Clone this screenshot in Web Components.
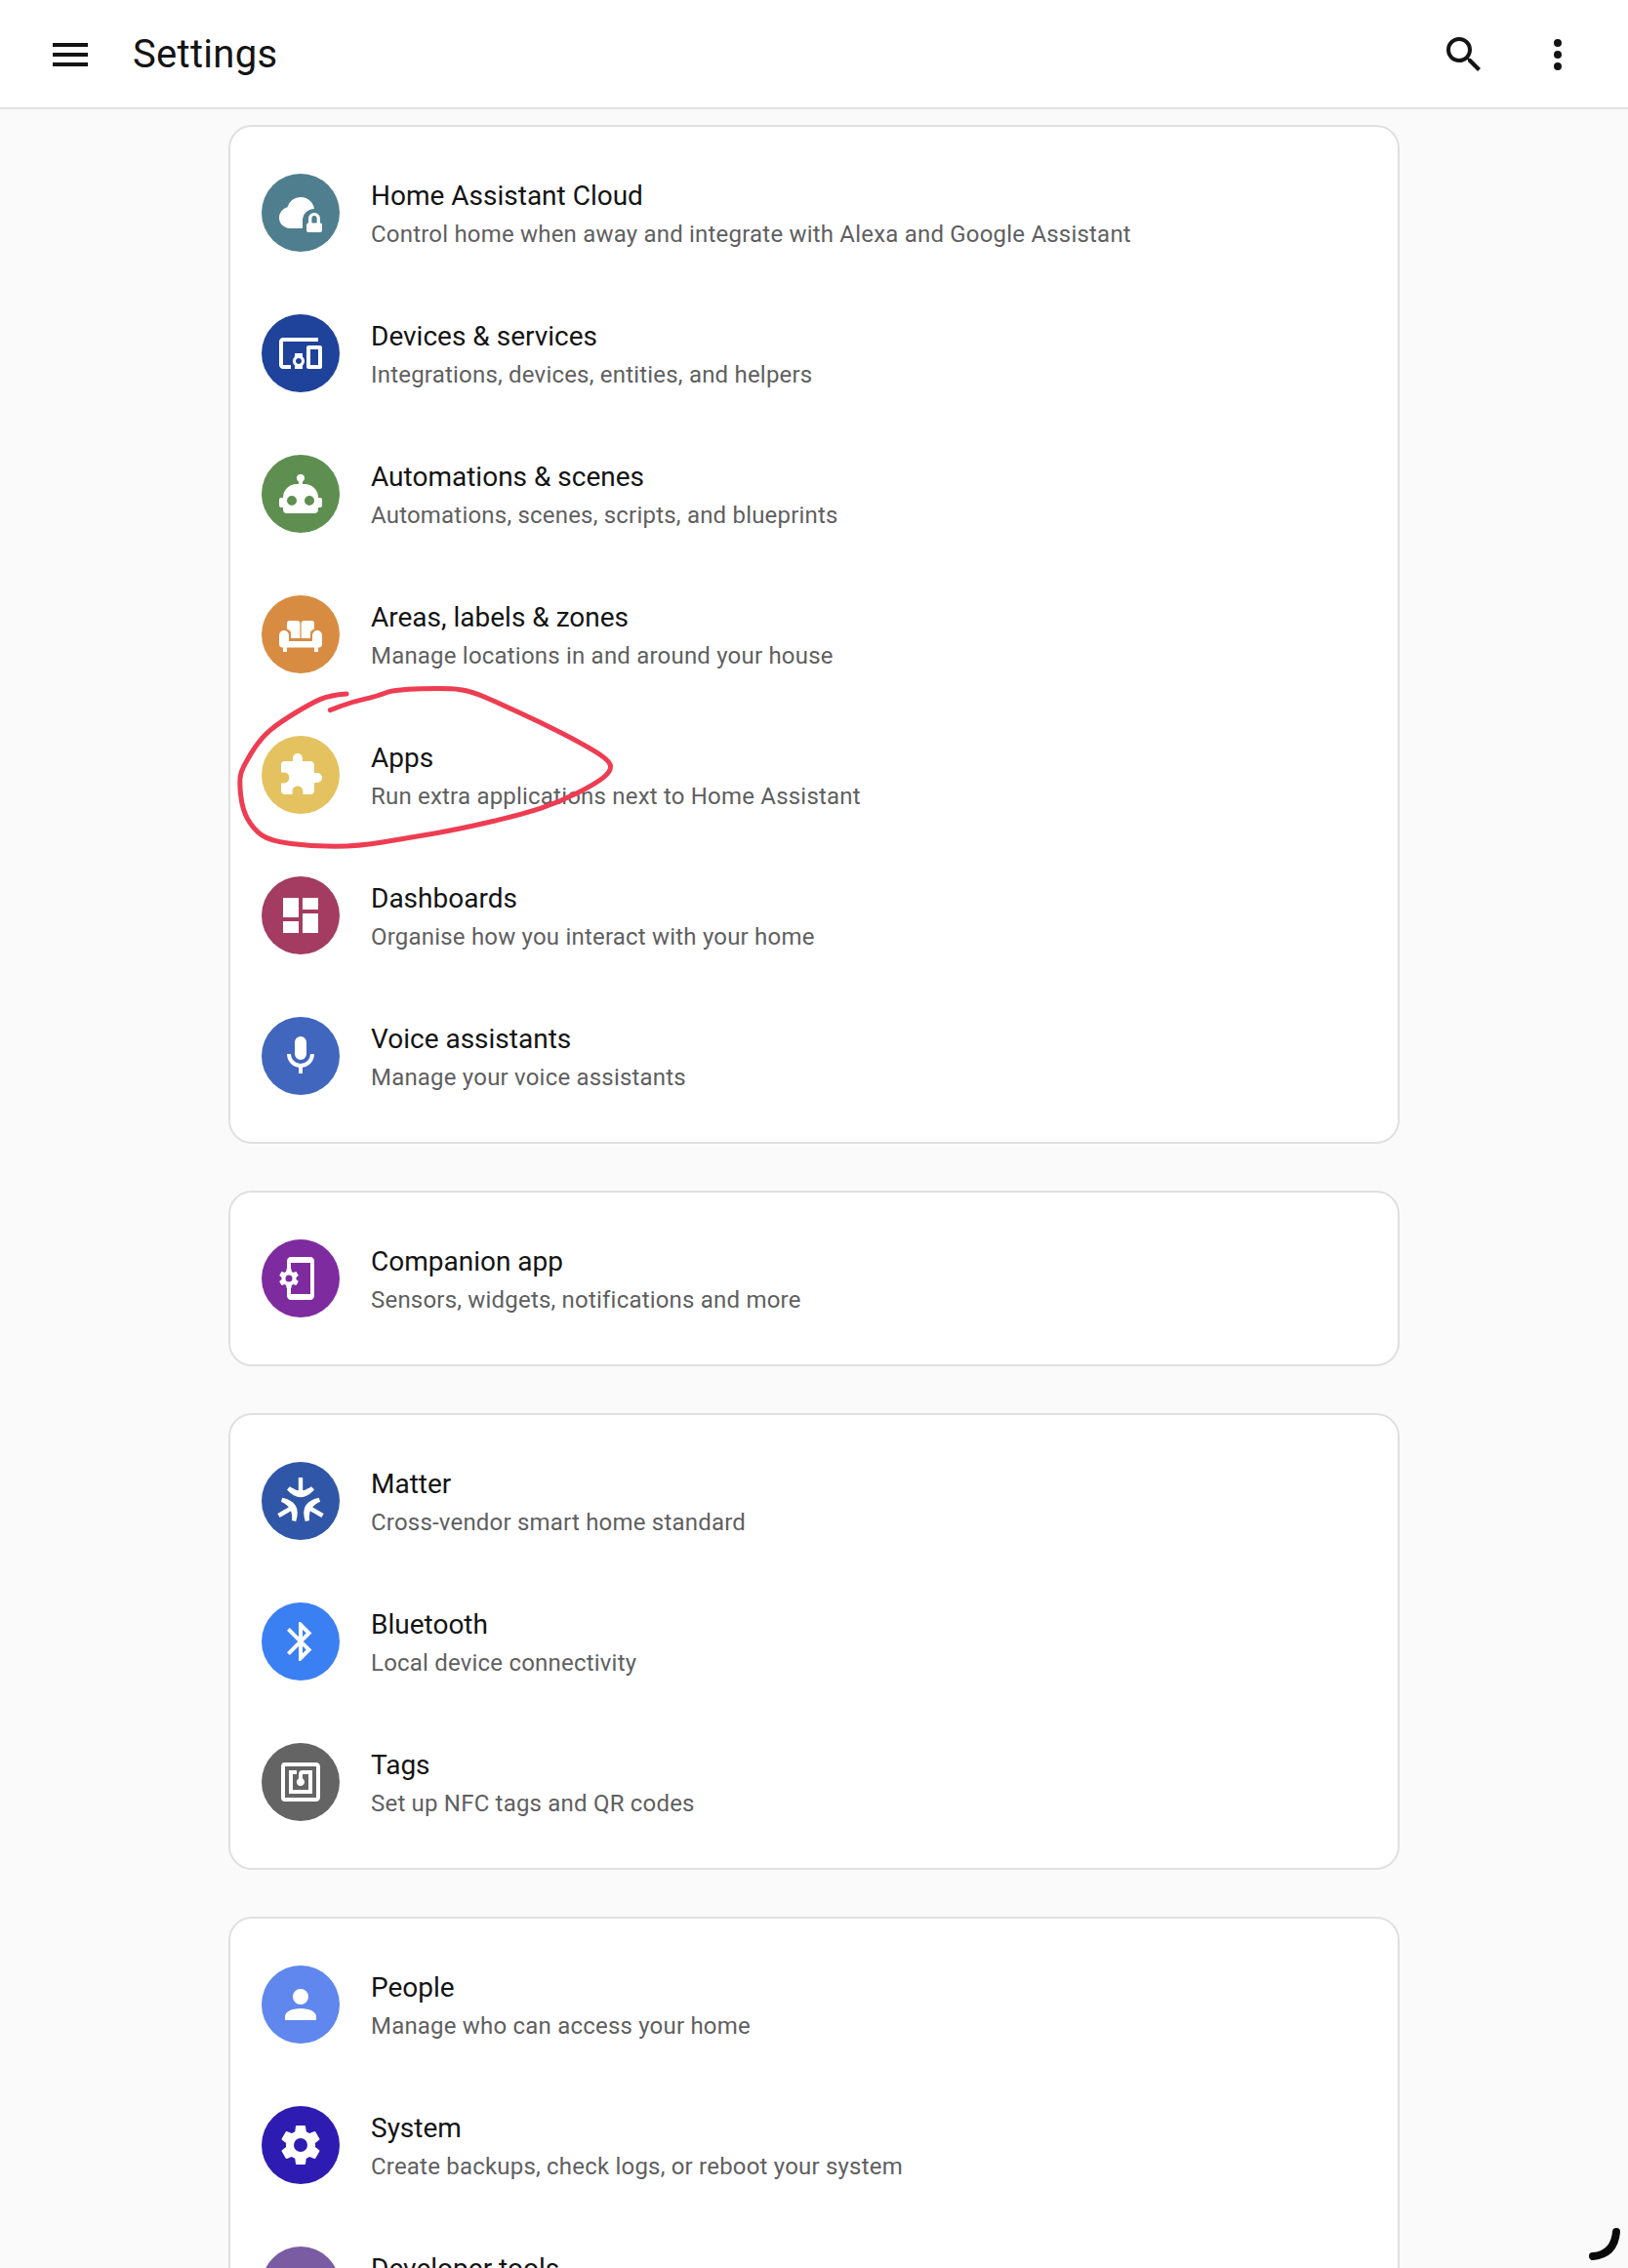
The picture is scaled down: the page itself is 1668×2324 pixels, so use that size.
<!DOCTYPE html>
<html lang="en">
<head>
<meta charset="utf-8">
<title>Settings</title>
<style>
  html, body { margin: 0; height: 100%; overflow: hidden; background: #fafafa; }
  body { font-family: Roboto, "Liberation Sans", sans-serif; position: relative; }
</style>
</head>
<body>
<settings-page>
  <settings-card>
    <settings-row icon="cloud" color="#4f7f8e">
      <span slot="title">Home Assistant Cloud</span>Control home when away and integrate with Alexa and Google Assistant
    </settings-row>
    <settings-row icon="devices" color="#1f429a">
      <span slot="title">Devices &amp; services</span>Integrations, devices, entities, and helpers
    </settings-row>
    <settings-row icon="robot" color="#5f8f50">
      <span slot="title">Automations &amp; scenes</span>Automations, scenes, scripts, and blueprints
    </settings-row>
    <settings-row icon="sofa" color="#d88c42">
      <span slot="title">Areas, labels &amp; zones</span>Manage locations in and around your house
    </settings-row>
    <settings-row icon="puzzle" color="#e5c260">
      <span slot="title">Apps</span>Run extra applications next to Home Assistant
    </settings-row>
    <settings-row icon="dashboard" color="#a33c60">
      <span slot="title">Dashboards</span>Organise how you interact with your home
    </settings-row>
    <settings-row icon="microphone" color="#4066be">
      <span slot="title">Voice assistants</span>Manage your voice assistants
    </settings-row>
  </settings-card>
  <settings-card>
    <settings-row icon="phone" color="#7f2ba0">
      <span slot="title">Companion app</span>Sensors, widgets, notifications and more
    </settings-row>
  </settings-card>
  <settings-card>
    <settings-row icon="matter" color="#3056a8">
      <span slot="title">Matter</span>Cross-vendor smart home standard
    </settings-row>
    <settings-row icon="bluetooth" color="#3b80f2">
      <span slot="title">Bluetooth</span>Local device connectivity
    </settings-row>
    <settings-row icon="nfc" color="#646464">
      <span slot="title">Tags</span>Set up NFC tags and QR codes
    </settings-row>
  </settings-card>
  <settings-card>
    <settings-row icon="account" color="#6087ee">
      <span slot="title">People</span>Manage who can access your home
    </settings-row>
    <settings-row icon="cog" color="#2e1cb2">
      <span slot="title">System</span>Create backups, check logs, or reboot your system
    </settings-row>
    <settings-row icon="hammer" color="#7a5ca2">
      <span slot="title">Developer tools</span>
    </settings-row>
  </settings-card>
</settings-page>
<pen-mark></pen-mark>

<script>
const COG = 'M12,15.5A3.5,3.5 0 0,1 8.5,12A3.5,3.5 0 0,1 12,8.5A3.5,3.5 0 0,1 15.5,12A3.5,3.5 0 0,1 12,15.5M19.43,12.97C19.47,12.65 19.5,12.33 19.5,12C19.5,11.67 19.47,11.34 19.43,11L21.54,9.37C21.73,9.22 21.78,8.95 21.66,8.73L19.66,5.27C19.54,5.05 19.27,4.96 19.05,5.05L16.56,6.05C16.04,5.66 15.5,5.32 14.87,5.07L14.5,2.42C14.46,2.18 14.25,2 14,2H10C9.75,2 9.54,2.18 9.5,2.42L9.13,5.07C8.5,5.32 7.96,5.66 7.44,6.05L4.95,5.05C4.73,4.96 4.46,5.05 4.34,5.27L2.34,8.73C2.21,8.95 2.27,9.22 2.46,9.37L4.57,11C4.53,11.34 4.5,11.67 4.5,12C4.5,12.33 4.53,12.65 4.57,12.97L2.46,14.63C2.27,14.78 2.21,15.05 2.34,15.27L4.34,18.73C4.46,18.95 4.73,19.03 4.95,18.95L7.44,17.94C7.96,18.34 8.5,18.68 9.13,18.93L9.5,21.58C9.54,21.82 9.75,22 10,22H14C14.25,22 14.46,21.82 14.5,21.58L14.87,18.93C15.5,18.67 16.04,18.34 16.56,17.94L19.05,18.95C19.27,19.03 19.54,18.95 19.66,18.73L21.66,15.27C21.78,15.05 21.73,14.78 21.54,14.63L19.43,12.97Z';
const MATTER_ARM = 'M10.9,0H13.1V8H10.9ZM5,6.2L6.5,4.6Q12,8.8 17.5,4.6L19,6.2Q12,14 5,6.2Z';

// icons on a 24 unit grid
const ICONS = {
  menu: '<path d="M3,6H21V8H3V6M3,11H21V13H3V11M3,16H21V18H3V16Z"/>',
  search: '<path d="M9.5,3A6.5,6.5 0 0,1 16,9.5C16,11.11 15.41,12.59 14.44,13.73L14.71,14H15.5L20.5,19L19,20.5L14,15.5V14.71L13.73,14.44C12.59,15.41 11.11,16 9.5,16A6.5,6.5 0 0,1 3,9.5A6.5,6.5 0 0,1 9.5,3M9.5,5C7,5 5,7 5,9.5C5,12 7,14 9.5,14C12,14 14,12 14,9.5C14,7 12,5 9.5,5Z"/>',
  dots: '<path d="M12,16A2,2 0 0,1 14,18A2,2 0 0,1 12,20A2,2 0 0,1 10,18A2,2 0 0,1 12,16M12,10A2,2 0 0,1 14,12A2,2 0 0,1 12,14A2,2 0 0,1 10,12A2,2 0 0,1 12,10M12,4A2,2 0 0,1 14,6A2,2 0 0,1 12,8A2,2 0 0,1 10,6A2,2 0 0,1 12,4Z"/>',
  cloud: '<path d="M6.5,20Q4.22,20 2.61,18.43 1,16.85 1,14.58 1,12.63 2.17,11.1 3.35,9.57 5.25,9.15 5.88,6.85 7.75,5.43 9.63,4 12,4 14.93,4 16.96,6.04 19,8.07 19,11 20.73,11.2 21.86,12.5 23,13.78 23,15.5 23,17.38 21.69,18.69 20.38,20 18.5,20Z"/><path style="fill:var(--badge)" d="M13,24V16A6,6 0 0,1 25,16V24Z"/><path fill-rule="evenodd" d="M16,17.3V15A3,3 0 0,1 22,15V17.3A1,1 0 0,1 23,18.3V21A1,1 0 0,1 22,22H16A1,1 0 0,1 15,21V18.3A1,1 0 0,1 16,17.3ZM17.7,17.3H20.3V15A1.3,1.5 0 0,0 17.7,15Z"/>',
  devices: '<path d="M3 6H21V4H3C1.9 4 1 4.9 1 6V18C1 19.1 1.9 20 3 20H7V18H3V6M13 12H9V13.78C8.39 14.33 8 15.11 8 16C8 16.89 8.39 17.67 9 18.22V20H13V18.22C13.61 17.67 14 16.88 14 16S13.61 14.33 13 13.78V12M11 17.5C10.17 17.5 9.5 16.83 9.5 16S10.17 14.5 11 14.5 12.5 15.17 12.5 16 11.83 17.5 11 17.5M22 8H16C15.5 8 15 8.5 15 9V19C15 19.5 15.5 20 16 20H22C22.5 20 23 19.5 23 19V9C23 8.5 22.5 8 22 8M21 18H17V10H21V18Z"/>',
  robot: '<path d="M12,2A2,2 0 0,1 14,4C14,4.74 13.6,5.39 13,5.73V7H14A7,7 0 0,1 21,14H22A1,1 0 0,1 23,15V18A1,1 0 0,1 22,19H21V20A2,2 0 0,1 19,22H5A2,2 0 0,1 3,20V19H2A1,1 0 0,1 1,18V15A1,1 0 0,1 2,14H3A7,7 0 0,1 10,7H11V5.73C10.4,5.39 10,4.74 10,4A2,2 0 0,1 12,2M7.5,13A2.5,2.5 0 0,0 5,15.5A2.5,2.5 0 0,0 7.5,18A2.5,2.5 0 0,0 10,15.5A2.5,2.5 0 0,0 7.5,13M16.5,13A2.5,2.5 0 0,0 14,15.5A2.5,2.5 0 0,0 16.5,18A2.5,2.5 0 0,0 19,15.5A2.5,2.5 0 0,0 16.5,13Z"/>',
  sofa: '<path d="M6.3,5H10.2A1.5,1.5 0 0,1 11.7,6.5V14H7V11.5C7,10.6 6.5,9.9 5,9.3V6.3A1.3,1.3 0 0,1 6.3,5ZM13.8,5H17.7A1.3,1.3 0 0,1 19,6.3V9.3C17.5,9.9 17,10.6 17,11.5V14H12.3V6.5A1.5,1.5 0 0,1 13.8,5ZM3.5,10A2.5,2.5 0 0,1 6,12.5V15.5H18V12.5A2.5,2.5 0 0,1 23,12.5V17A1.7,1.7 0 0,1 21.3,18.7H21V21H19V18.7H5V21H3V18.7H2.7A1.7,1.7 0 0,1 1,17V12.5A2.5,2.5 0 0,1 3.5,10Z"/>',
  puzzle: '<path d="M20.5,11H19V7C19,5.89 18.1,5 17,5H13V3.5A2.5,2.5 0 0,0 10.5,1A2.5,2.5 0 0,0 8,3.5V5H4A2,2 0 0,0 2,7V10.8H3.5C5,10.8 6.2,12 6.2,13.5C6.2,15 5,16.2 3.5,16.2H2V20A2,2 0 0,0 4,22H7.8V20.5C7.8,19 9,17.8 10.5,17.8C12,17.8 13.2,19 13.2,20.5V22H17A2,2 0 0,0 19,20V16H20.5A2.5,2.5 0 0,0 23,13.5A2.5,2.5 0 0,0 20.5,11Z"/>',
  dashboard: '<path d="M13,3V9H21V3M13,21H21V11H13M3,21H11V15H3M3,13H11V3H3V13Z"/>',
  microphone: '<path d="M12,2A3,3 0 0,1 15,5V11A3,3 0 0,1 12,14A3,3 0 0,1 9,11V5A3,3 0 0,1 12,2M19,11C19,14.53 16.39,17.44 13,17.93V21H11V17.93C7.61,17.44 5,14.53 5,11H7A5,5 0 0,0 12,16A5,5 0 0,0 17,11H19Z"/>',
  phone: `<path d="M7,1C5.9,1 5,1.9 5,3V7H7V4H17V20H7V17H5V21C5,22.1 5.9,23 7,23H17C18.1,23 19,22.1 19,21V3C19,1.89 18.1,1 17,1H7Z"/><path transform="translate(0 6) scale(.5)" d="${COG}"/>`,
  matter: `<path d="${MATTER_ARM}"/><path transform="rotate(120 12 13)" d="${MATTER_ARM}"/><path transform="rotate(240 12 13)" d="${MATTER_ARM}"/>`,
  bluetooth: '<path d="M14.88,16.29L13,18.17V14.41M13,5.83L14.88,7.71L13,9.58M17.71,7.71L12,2H11V9.58L6.41,5L5,6.41L10.59,12L5,17.59L6.41,19L11,14.41V22H12L17.71,16.29L13.41,12L17.71,7.71Z"/>',
  nfc: '<path d="M18,6H13A2,2 0 0,0 11,8V10.28C10.41,10.62 10,11.26 10,12A2,2 0 0,0 12,14C13.11,14 14,13.1 14,12C14,11.26 13.6,10.62 13,10.28V8H16V16H8V8H10V6H8L6,6V18H18M20,20H4V4H20M20,2H4A2,2 0 0,0 2,4V20A2,2 0 0,0 4,22H20C21.11,22 22,21.1 22,20V4C22,2.89 21.11,2 20,2Z"/>',
  account: '<path d="M12,4A4,4 0 0,1 16,8A4,4 0 0,1 12,12A4,4 0 0,1 8,8A4,4 0 0,1 12,4M12,14C16.42,14 20,15.79 20,18V20H4V18C4,15.79 7.58,14 12,14Z"/>',
  cog: `<path d="${COG}"/>`,
  hammer: '<path d="M2 19.63L13.43 8.2L12.72 7.5L14.14 6.07L12 3.89C13.2 2.7 15.09 2.7 16.27 3.89L19.87 7.5L18.45 8.91H21.29L22 9.62L18.45 13.21L17.74 12.5V9.62L16.27 11.04L15.56 10.33L4.13 21.76L2 19.63Z"/>'
};

const svgIcon = name => `<svg viewBox="0 0 24 24" width="48" height="48" fill="currentColor" aria-hidden="true">${ICONS[name]}</svg>`;

class TopBar extends HTMLElement {
  connectedCallback() {
    const shadow = this.attachShadow({ mode: 'open' });
    shadow.innerHTML = `
      <style>
        :host {
          display: flex;
          align-items: center;
          flex: none;
          height: 108px;
          padding: 2px 24px 0;
          background: #fff;
          border-bottom: 2px solid #e0e0e0;
          color: #141414;
        }
        .btn { display: flex; align-items: center; justify-content: center; width: 96px; height: 96px; }
        svg { display: block; }
        h1 {
          flex: 1;
          margin: 0 0 0 16px;
          font: 400 40px/48px Roboto, sans-serif;
          letter-spacing: 0.3px;
        }
      </style>
      <div class="btn">${svgIcon('menu')}</div>
      <h1><slot></slot></h1>
      <div class="btn">${svgIcon('search')}</div>
      <div class="btn">${svgIcon('dots')}</div>
    `;
  }
}

class SettingsPage extends HTMLElement {
  connectedCallback() {
    const shadow = this.attachShadow({ mode: 'open' });
    shadow.innerHTML = `
      <style>
        :host { display: flex; flex-direction: column; height: 100vh; overflow: hidden; }
        main {
          flex: 1;
          overflow: hidden;
          display: flex;
          flex-direction: column;
          gap: 48px;
          width: 1200px;
          margin: 0 auto;
          padding-top: 16px;
        }
      </style>
      <top-bar>Settings</top-bar>
      <main><slot></slot></main>
    `;
  }
}

class SettingsCard extends HTMLElement {
  connectedCallback() {
    const shadow = this.attachShadow({ mode: 'open' });
    shadow.innerHTML = `
      <style>
        :host {
          display: block;
          flex: none;
          padding: 16px 0;
          background: #fff;
          border: 2px solid #e0e0e0;
          border-radius: 24px;
        }
      </style>
      <slot></slot>
    `;
  }
}

class SettingsRow extends HTMLElement {
  connectedCallback() {
    const shadow = this.attachShadow({ mode: 'open' });
    const color = this.getAttribute('color');
    shadow.innerHTML = `
      <style>
        :host {
          display: flex;
          align-items: center;
          gap: 32px;
          height: 144px;
          padding: 0 32px;
          --badge: ${color};
        }
        .badge {
          flex: none;
          display: flex;
          align-items: center;
          justify-content: center;
          width: 80px;
          height: 80px;
          border-radius: 50%;
          background: ${color};
          color: #fff;
        }
        svg { display: block; }
        .text { display: flex; flex-direction: column; box-sizing: border-box; height: 88px; padding-top: 7px; min-width: 0; }
        .title { font: 400 28px/40px Roboto, sans-serif; color: #141414; }
        .sub { font: 400 24px/38px Roboto, sans-serif; letter-spacing: 0.2px; color: #5f5f5f; }
      </style>
      <div class="badge">${svgIcon(this.getAttribute('icon'))}</div>
      <div class="text">
        <div class="title"><slot name="title"></slot></div>
        <div class="sub"><slot></slot></div>
      </div>
    `;
  }
}

// hand drawn ring around Apps and the loading arc, both lie over the page
class PenMark extends HTMLElement {
  connectedCallback() {
    const shadow = this.attachShadow({ mode: 'open' });
    const pts = [[405,93],[355,97],[300,120],[200,180],[140,230],[85,320],[75,360],[85,450],[120,510],[170,545],[300,562],[440,562],[600,535],[760,507],[950,462],[1060,425],[1170,370],[1220,330],[1212,295],[1110,235],[1000,180],[870,120],[790,85],[720,75],[550,80],[500,100],[420,118],[355,143]]
      .map(([x, y]) => [220 + x / 3, 680 + y / 3]);
    let d = `M${pts[0][0]} ${pts[0][1]}`;
    for (let i = 1; i < pts.length - 1; i++) {
      const mx = (pts[i][0] + pts[i + 1][0]) / 2;
      const my = (pts[i][1] + pts[i + 1][1]) / 2;
      d += `Q${pts[i][0]} ${pts[i][1]} ${mx} ${my}`;
    }
    const last = pts[pts.length - 1];
    d += `L${last[0]} ${last[1]}`;
    shadow.innerHTML = `
      <style>
        :host { position: absolute; inset: 0; pointer-events: none; display: block; }
        svg { display: block; width: 100%; height: 100%; }
      </style>
      <svg viewBox="0 0 1668 2324" fill="none" stroke-linecap="round">
        <path d="${d}" stroke="#ee3d52" stroke-width="5"/>
        <path d="M1656 2287Q1654 2310 1632 2312" stroke="#0a0a0a" stroke-width="8"/>
      </svg>
    `;
  }
}

customElements.define('top-bar', TopBar);
customElements.define('settings-page', SettingsPage);
customElements.define('settings-card', SettingsCard);
customElements.define('settings-row', SettingsRow);
customElements.define('pen-mark', PenMark);
</script>
</body>
</html>
